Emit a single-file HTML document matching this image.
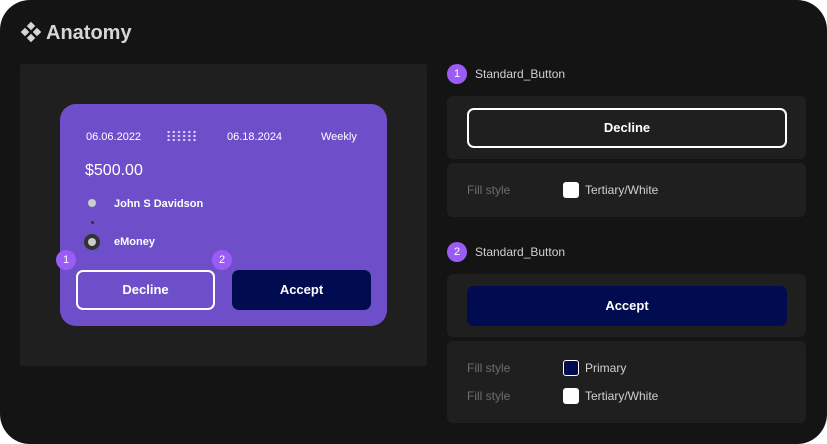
<!DOCTYPE html>
<html><head><meta charset="utf-8"><style>
*{margin:0;padding:0;box-sizing:border-box}
body{width:827px;height:444px;background:#fff;font-family:"Liberation Sans",sans-serif;overflow:hidden;position:relative}
.main{position:absolute;left:0;top:0;width:827px;height:444px;background:#141414;border-radius:30px}
.abs{position:absolute}
.title{left:46px;top:22px;font-size:20px;font-weight:bold;color:#d6d6d6}
.panel{left:20px;top:64px;width:407px;height:302px;background:#1f1f1f;border-radius:3px}
.card{left:60px;top:104px;width:327px;height:222px;background:#6e4fc9;border-radius:16px}
.w{color:#fff;font-size:11px}
.badge{width:20px;height:20px;border-radius:50%;background:#9b5cf5;color:#fff;font-size:11px;text-align:center;line-height:20px}
.box{background:#1f1f1f;border-radius:6px;left:447px;width:359px}
.btn{border-radius:7px;text-align:center;color:#fff;font-weight:600;font-size:13px}
.lbl{color:#6d6d6d;font-size:12px}
.val{color:#d0d0d0;font-size:12px}
.sw{width:16px;height:16px;border-radius:3px;background:#fff}
.st{color:#cfcfcf;font-size:12px}
</style></head><body>
<div class="main"></div>
<div class="abs" style="left:22px;top:23px;width:18px;height:18px">
 <div class="abs" style="left:6px;top:0;width:6px;height:6px;background:#d6d6d6;transform:rotate(45deg)"></div>
 <div class="abs" style="left:0;top:6px;width:6px;height:6px;background:#d6d6d6;transform:rotate(45deg)"></div>
 <div class="abs" style="left:12px;top:6px;width:6px;height:6px;background:#d6d6d6;transform:rotate(45deg)"></div>
 <div class="abs" style="left:6px;top:12px;width:6px;height:6px;background:#d6d6d6;transform:rotate(45deg)"></div>
</div>
<div class="abs title">Anatomy</div>
<div class="abs panel"></div>
<div class="abs card"></div>
<div class="abs w" style="left:86px;top:131px">06.06.2022</div>
<div class="abs" style="left:166px;top:130px;width:30px;height:12px;background-image:radial-gradient(circle,#e0d8ff 1px,transparent 1.3px);background-size:5.2px 4px"></div>
<div class="abs w" style="left:227px;top:131px">06.18.2024</div>
<div class="abs w" style="left:321px;top:131px">Weekly</div>
<div class="abs" style="left:85px;top:162px;color:#fff;font-size:16px">$500.00</div>
<div class="abs" style="left:88px;top:199px;width:8px;height:8px;border-radius:50%;background:#ccc"></div>
<div class="abs" style="left:91px;top:221px;width:3px;height:3px;border-radius:50%;background:#333"></div>
<div class="abs" style="left:84px;top:234px;width:16px;height:16px;border-radius:50%;background:#333"></div>
<div class="abs" style="left:88px;top:238px;width:8px;height:8px;border-radius:50%;background:#ccc"></div>
<div class="abs w" style="left:114px;top:198px;font-weight:600">John S Davidson</div>
<div class="abs w" style="left:114px;top:236px;font-weight:600">eMoney</div>
<div class="abs badge" style="left:56px;top:250px">1</div>
<div class="abs badge" style="left:212px;top:250px">2</div>
<div class="abs btn" style="left:76px;top:270px;width:139px;height:40px;border:2px solid #fff;line-height:36px">Decline</div>
<div class="abs btn" style="left:232px;top:270px;width:139px;height:40px;background:#000c4f;line-height:40px">Accept</div>

<div class="abs badge" style="left:447px;top:64px">1</div>
<div class="abs st" style="left:475px;top:67px">Standard_Button</div>
<div class="abs box" style="top:96px;height:63px"></div>
<div class="abs btn" style="left:467px;top:108px;width:320px;height:40px;border:2px solid #fff;line-height:36px">Decline</div>
<div class="abs box" style="top:163px;height:54px"></div>
<div class="abs lbl" style="left:467px;top:183px">Fill style</div>
<div class="abs sw" style="left:563px;top:182px"></div>
<div class="abs val" style="left:585px;top:183px">Tertiary/White</div>

<div class="abs badge" style="left:447px;top:242px">2</div>
<div class="abs st" style="left:475px;top:245px">Standard_Button</div>
<div class="abs box" style="top:274px;height:63px"></div>
<div class="abs btn" style="left:467px;top:286px;width:320px;height:40px;background:#000c4f;line-height:40px">Accept</div>
<div class="abs box" style="top:341px;height:82px"></div>
<div class="abs lbl" style="left:467px;top:361px">Fill style</div>
<div class="abs sw" style="left:563px;top:360px;background:#000c4f;border:1.5px solid #fff"></div>
<div class="abs val" style="left:585px;top:361px">Primary</div>
<div class="abs lbl" style="left:467px;top:389px">Fill style</div>
<div class="abs sw" style="left:563px;top:388px"></div>
<div class="abs val" style="left:585px;top:389px">Tertiary/White</div>
</body></html>
